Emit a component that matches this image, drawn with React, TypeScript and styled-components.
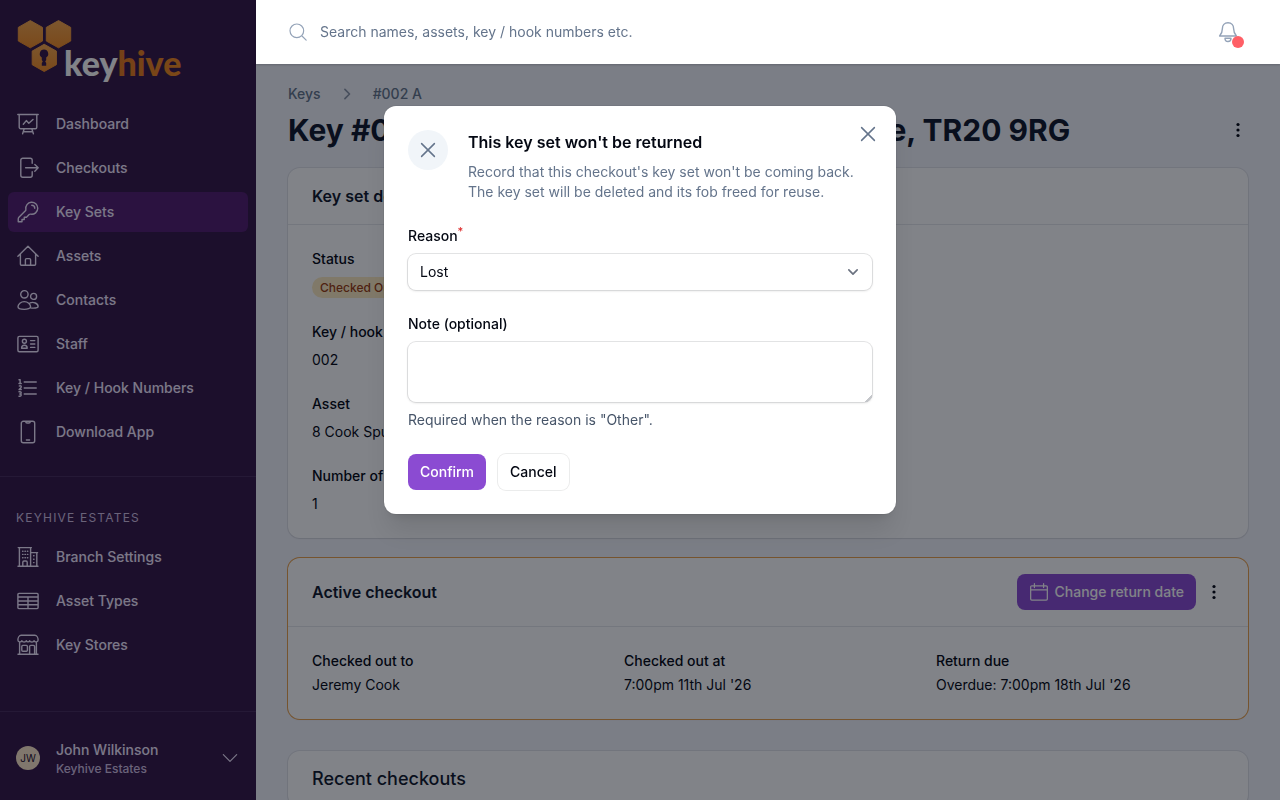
import React from "react";
import styled, { createGlobalStyle } from "styled-components";

const GlobalStyle = createGlobalStyle`
  *, *::before, *::after { box-sizing: border-box; }
  body {
    margin: 0;
    overflow: hidden;
    background: #f3f4fa;
    color: #030712;
    font-family: Inter, "Liberation Sans", sans-serif;
    font-size: 14px;
    line-height: 20px;
  }
  h1, h2, p, dl, dd, ul, ol { margin: 0; padding: 0; }
  ul, ol { list-style: none; }
  a { color: inherit; text-decoration: none; }
  button, select, textarea, input { font: inherit; color: inherit; }
`;

const Svg = styled.svg<{ $size?: number; $weight?: number }>`
  display: block;
  flex: none;
  width: ${(p) => p.$size ?? 24}px;
  height: ${(p) => p.$size ?? 24}px;
  fill: none;
  stroke: currentColor;
  stroke-width: ${(p) => p.$weight ?? 1.4};
  stroke-linecap: round;
  stroke-linejoin: round;
`;

const Shell = styled.div`
  display: grid;
  grid-template-columns: 256px minmax(0, 1fr);
  align-items: start;
  min-height: 100vh;
`;

/* Sidebar */
const Sidebar = styled.aside`
  display: flex;
  flex-direction: column;
  height: 100vh;
  background: #351747;
  color: #fff;
`;
const LogoLink = styled.a`
  display: block;
  padding: 16px;
  height: 104px;
`;
const LogoSvg = styled.svg`
  display: block;
  width: 168px;
  height: 72px;
  font-family: Lato, sans-serif;
  font-weight: 900;
  font-size: 34px;
`;
const NavList = styled.ul`
  display: grid;
  gap: 4px;
  padding: 0 8px;
`;
const NavLink = styled.a<{ $active?: boolean }>`
  display: flex;
  align-items: center;
  gap: 16px;
  height: 40px;
  padding: 0 8px;
  border-radius: 6px;
  font-weight: 500;
  color: #f3e8ff;
  background: ${(p) => (p.$active ? "#521c6e" : "transparent")};
`;
const NavGroup = styled.div`
  margin-top: 24px;
  padding-top: 31px;
  border-top: 1px solid #472a5a;
`;
const NavHeading = styled.h2`
  padding: 0 16px;
  margin-bottom: 9px;
  font-size: 12px;
  line-height: 20px;
  font-weight: 400;
  letter-spacing: 0.1em;
  text-transform: uppercase;
  color: #d0bfe0;
`;
const UserMenu = styled.button`
  display: flex;
  align-items: center;
  gap: 16px;
  margin-top: auto;
  padding: 28px 16px 24px;
  height: 89px;
  border: 0;
  border-top: 1px solid #472a5a;
  background: none;
  text-align: left;
  color: #f3e8ff;
`;
const Avatar = styled.span`
  display: grid;
  place-items: center;
  width: 24px;
  height: 24px;
  border-radius: 50%;
  background: #fde6c8;
  color: #1c0e2d;
  font-size: 10px;
  font-weight: 400;
`;
const UserText = styled.span`
  display: grid;
  flex: 1;
  padding-top: 2px;
  font-weight: 500;
  small {
    font-size: 12px;
    line-height: 18px;
    color: #d0bfe0;
  }
`;

/* Top bar */
const Column = styled.div`
  min-width: 0;
`;
const TopBar = styled.header`
  position: relative;
  z-index: 30;
  display: flex;
  align-items: center;
  height: 64px;
  padding: 0 40px 0 32px;
  background: #fff;
  box-shadow: 0 1px 2px rgba(3, 7, 18, 0.2);
  color: #94a3b8;
`;
const SearchLabel = styled.label`
  display: flex;
  flex: 1;
  align-items: center;
  gap: 12px;
`;
const SearchInput = styled.input`
  flex: 1;
  border: 0;
  padding: 0;
  outline: 0;
  background: none;
  &::placeholder { color: #64748b; opacity: 1; }
`;
const BellButton = styled.button`
  position: relative;
  padding: 0;
  border: 0;
  background: none;
`;
const AlertDot = styled.span`
  position: absolute;
  right: -4px;
  bottom: -4px;
  width: 12px;
  height: 12px;
  border-radius: 50%;
  background: #ff5f66;
`;

/* Page */
const Main = styled.main`
  padding: 20px 32px 32px;
`;
const Crumbs = styled.ol`
  display: flex;
  align-items: center;
  gap: 16px;
  font-weight: 500;
  color: #64748b;
`;
const Crumb = styled.li`
  display: flex;
  align-items: center;
  gap: 16px;
  svg { color: #8b95a7; }
`;
const TitleRow = styled.div`
  display: flex;
  align-items: center;
  justify-content: space-between;
  margin: 8px 0 20px;
`;
const Title = styled.h1`
  font-size: 30px;
  line-height: 36px;
  font-weight: 700;
  white-space: nowrap;
  color: #0f172a;
`;
const IconButton = styled.button`
  padding: 0;
  border: 0;
  background: none;
  color: inherit;
`;
const Card = styled.section<{ $accent?: boolean; $space?: number }>`
  margin-top: ${(p) => p.$space ?? 0}px;
  border-radius: 12px;
  background: #fff;
  box-shadow: 0 0 0 1px ${(p) => (p.$accent ? "#e8a04a" : "rgba(15, 23, 42, 0.08)")},
    0 1px 2px rgba(3, 7, 18, 0.06);
`;
const CardHead = styled.div`
  display: flex;
  align-items: center;
  gap: 8px;
  padding: 16px 24px;
`;
const CardTitle = styled.h2<{ $table?: boolean }>`
  flex: 1;
  font-size: ${(p) => (p.$table ? 18 : 16)}px;
  line-height: 24px;
  font-weight: ${(p) => (p.$table ? 500 : 600)};
  color: #0f172a;
`;
const Details = styled.dl<{ $columns?: number }>`
  display: grid;
  grid-template-columns: repeat(${(p) => p.$columns ?? 1}, minmax(0, 1fr));
  gap: 24px;
  padding: 24px;
  border-top: 1px solid #e5e7eb;
`;
const Entry = styled.div<{ $gap: number }>`
  display: grid;
  gap: ${(p) => p.$gap}px;
  dt { font-weight: 500; }
`;
const Badge = styled.span`
  display: block;
  width: fit-content;
  padding: 0 8px;
  border-radius: 12px;
  background: #fdebc0;
  color: #9a3c10;
  font-size: 12px;
  line-height: 21px;
  font-weight: 500;
`;
const Button = styled.button<{ $primary?: boolean }>`
  display: flex;
  align-items: center;
  gap: 6px;
  height: 36px;
  padding: 0 12px;
  border: 0;
  border-radius: 8px;
  font-weight: 500;
  color: ${(p) => (p.$primary ? "#fff" : "#030712")};
  background: ${(p) => (p.$primary ? "#8b4bd2" : "#fff")};
  box-shadow: ${(p) => (p.$primary ? "none" : "0 0 0 1px rgba(3, 7, 18, 0.08)")};
`;

/* Dialog */
const Backdrop = styled.div`
  position: fixed;
  inset: 0;
  z-index: 20;
  background: rgba(3, 7, 18, 0.5);
`;
const DialogLayer = styled.div`
  position: fixed;
  inset: 0;
  z-index: 40;
  display: grid;
  grid-template-rows: 1fr auto 3fr;
  justify-items: center;
  padding: 16px;
`;
const Dialog = styled.form`
  grid-row: 2;
  position: relative;
  width: 100%;
  max-width: 512px;
  padding: 24px;
  border-radius: 12px;
  background: #fff;
  box-shadow: 0 20px 25px -5px rgba(0, 0, 0, 0.1), 0 8px 10px -6px rgba(0, 0, 0, 0.1),
    0 0 0 1px rgba(3, 7, 18, 0.05);
`;
const CloseButton = styled(IconButton)`
  position: absolute;
  top: 16px;
  right: 16px;
  color: #64748b;
`;
const DialogHead = styled.div`
  display: flex;
  gap: 20px;
`;
const DialogIcon = styled.span`
  display: grid;
  place-items: center;
  flex: none;
  width: 40px;
  height: 40px;
  border-radius: 50%;
  background: #f1f5f9;
  color: #64748b;
`;
const DialogTitle = styled.h2`
  font-size: 16px;
  line-height: 24px;
  font-weight: 600;
`;
const DialogText = styled.p`
  margin-top: 8px;
  color: #64748b;
`;
const Field = styled.div`
  display: grid;
  gap: 8px;
  margin-top: 24px;
`;
const FieldLabel = styled.label`
  font-weight: 500;
  sup {
    font-size: 11px;
    line-height: 0;
    color: #dc2626;
  }
`;
const SelectWrap = styled.div`
  position: relative;
  color: #6b7280;
  svg {
    position: absolute;
    right: 9px;
    top: 8px;
    pointer-events: none;
  }
`;
const controlRing = "0 0 0 1px rgba(3, 7, 18, 0.1), 0 1px 2px 1px rgba(0, 0, 0, 0.06)";
const Select = styled.select`
  display: block;
  appearance: none;
  width: 100%;
  height: 36px;
  padding: 0 12px;
  border: 0;
  border-radius: 8px;
  background: #fff;
  color: #030712;
  box-shadow: ${controlRing};
`;
const TextArea = styled.textarea`
  display: block;
  width: 100%;
  height: 60px;
  padding: 8px 12px;
  border: 0;
  border-radius: 8px;
  background: #fff;
  resize: vertical;
  box-shadow: ${controlRing};
  &::-webkit-resizer {
    background: linear-gradient(135deg, transparent 74%, #c4c6ca 74%, #c4c6ca 86%, transparent 86%);
  }
`;
const Hint = styled.p`
  color: #475569;
`;
const Actions = styled.div`
  display: flex;
  gap: 12px;
  margin-top: 24px;
`;

const icons = {
  dashboard: "M1.8 2.5h20.4M3.2 2.5v12.8a1.5 1.5 0 0 0 1.5 1.5h14.6a1.5 1.5 0 0 0 1.5-1.5V2.5M7.3 12.2l3-3.6 2.5 2.6L17 7.4M8.2 16.8 6.6 21.8M15.8 16.8l1.6 5M7.2 19.8h9.6",
  checkouts: "M16.2 7.2V4.2a2 2 0 0 0-2-2H6.8a2 2 0 0 0-2 2v15a2 2 0 0 0 2 2h7.4a2 2 0 0 0 2-2v-3.4M9.6 11.8h12.6M18.8 8.4l3.4 3.4-3.4 3.4",
  key: "M15.75 5.25a3 3 0 0 1 3 3m3 0a6 6 0 0 1-7.029 5.912c-.563-.097-1.159.026-1.563.43L10.5 17.25H8.25v2.25H6v2.25H2.25v-2.818c0-.597.237-1.17.659-1.591l6.499-6.499c.404-.404.527-1 .43-1.563A6 6 0 1 1 21.75 8.25Z",
  home: "M1.9 12.2 12 2.2l10.1 10M4.4 10v10.3a1 1 0 0 0 1 1h13.2a1 1 0 0 0 1-1V10M9.4 21.2v-5.4a1.2 1.2 0 0 1 1.2-1.2h2.8a1.2 1.2 0 0 1 1.2 1.2v5.4",
  contacts: "M8.4 2.6a3.7 3.7 0 1 0 0 7.4 3.7 3.7 0 0 0 0-7.4ZM17.6 5.4a3 3 0 1 0 0 6 3 3 0 0 0 0-6ZM8.3 13.6c-3.4 0-6.3 2.6-6.3 5.2 0 3.4 12.6 3.4 12.6 0 0-2.6-2.9-5.2-6.3-5.2ZM14.1 14.9c3.2-1.5 8 .6 8 3.6 0 1.6-4.3 1.8-7.5 1.4",
  staff: "M3.4 4.4h17.2a1.5 1.5 0 0 1 1.5 1.5v12.4a1.5 1.5 0 0 1-1.5 1.5H3.4a1.5 1.5 0 0 1-1.5-1.5V5.9a1.5 1.5 0 0 1 1.5-1.5ZM8.4 7.2a2 2 0 1 0 0 4 2 2 0 0 0 0-4ZM5.6 16.2c0-4 5.6-4 5.6 0ZM14.6 8.6h4.2M14.6 12h4.2M14.6 15.4h4.2",
  numbers: "M8.242 5.992h12m-12 6.003H20.24m-12 5.999h12M4.117 7.495v-3.75H2.99m1.125 3.75H2.99m1.125 0H5.24m-1.92 2.577a1.125 1.125 0 1 1 1.591 1.59l-1.83 1.83h2.16M2.99 15.745h1.125a1.125 1.125 0 0 1 0 2.25H3.74m0-.002h.375a1.125 1.125 0 0 1 0 2.25H2.99",
  phone: "M7.3 1.3h9.4a2 2 0 0 1 2 2v17.4a2 2 0 0 1-2 2H7.3a2 2 0 0 1-2-2V3.3a2 2 0 0 1 2-2ZM9.6 1.5c.2 1 .7 1.5 1.4 1.5h2c.7 0 1.2-.5 1.4-1.5M10.4 20h3.2",
  building: "M2 21.2h20M3.4 21.2V2.8M14.6 21.2V2.8M2.2 2.6h13.2M14.6 7.6h7M20.8 7.6v13.6M6.8 21.2v-4a1.2 1.2 0 0 1 1.2-1.2h2a1.2 1.2 0 0 1 1.2 1.2v4M6.6 6.2h.4M9 6.2h.4M11.4 6.2h.4M6.6 9.4h.4M9 9.4h.4M11.4 9.4h.4M6.6 12.7h.4M9 12.7h.4M11.4 12.7h.4M17.6 10.8h.4M17.6 14.2h.4M17.6 17.6h.4",
  table: "M2.9 4.4h18.2a1 1 0 0 1 1 1v13.2a1 1 0 0 1-1 1H2.9a1 1 0 0 1-1-1V5.4a1 1 0 0 1 1-1ZM1.9 8h20.2M1.9 12h20.2M1.9 15.8h20.2M12 8v11.6",
  store: "M2 21.3h20M3.6 9.2v12M20.4 9.2v12M5.2 2.3h13.6c2 0 3.3 2.4 3.3 4.6 0 2.4-3.4 2.6-4 .8-.6 1.8-3.8 1.8-4.4 0-.4 1.5-3 1.5-3.4 0-.6 1.8-3.8 1.8-4.4 0-.6 1.8-4 1.6-4-.8 0-2.2 1.3-4.6 3.3-4.6ZM6.8 12.4h3.6a1 1 0 0 1 1 1v3.8a1 1 0 0 1-1 1H6.8a1 1 0 0 1-1-1v-3.8a1 1 0 0 1 1-1ZM13.6 21.2v-7.6a1.2 1.2 0 0 1 1.2-1.2h2.6a1.2 1.2 0 0 1 1.2 1.2v7.6",
  search: "M10.6 2.4a8.2 8.2 0 1 0 0 16.4 8.2 8.2 0 0 0 0-16.4ZM16.5 16.5l5.3 5.3",
  bell: "M12 2.7c-3.6 0-5.6 2.6-5.6 5.8 0 3.4-.6 5-2.8 7.5h16.8c-2.2-2.5-2.8-4.1-2.8-7.5 0-3.2-2-5.8-5.6-5.8ZM9 18.2h6c0 4.4-6 4.4-6 0Z",
  close: "M5.6 5.6l12.8 12.8M18.4 5.6l-12.8 12.8",
  calendar: "M3.3 4.6h17.4a1.3 1.3 0 0 1 1.3 1.3v14.4a1.3 1.3 0 0 1-1.3 1.3H3.3A1.3 1.3 0 0 1 2 20.3V5.9a1.3 1.3 0 0 1 1.3-1.3ZM2 9.4h20M6.5 2v4.6M17.5 2v4.6",
  chevronDown: "M4 8l8 8 8-8",
  chevronRight: "M9.5 6.5l5.5 5.5-5.5 5.5",
  selectArrow: "M7 9.5l5 5 5-5",
};

type IconProps = { name: keyof typeof icons; size?: number; weight?: number };
const Icon = ({ name, size, weight }: IconProps) => (
  <Svg viewBox="0 0 24 24" $size={size} $weight={weight} aria-hidden="true">
    <path d={icons[name]} />
  </Svg>
);

const Dots = () => (
  <Svg viewBox="0 0 20 20" $size={20} aria-hidden="true">
    <g fill="currentColor" stroke="none">
      <circle cx="10" cy="4.5" r="1.6" />
      <circle cx="10" cy="10" r="1.6" />
      <circle cx="10" cy="15.5" r="1.6" />
    </g>
  </Svg>
);

const Logo = () => (
  <LogoSvg viewBox="0 0 168 72" role="img" aria-label="keyhive">
    <defs>
      <linearGradient id="comb" x1="0" y1="0" x2="0" y2="1">
        <stop offset="0" stopColor="#f5a64a" />
        <stop offset="1" stopColor="#f08a24" />
      </linearGradient>
      <linearGradient id="word" x1="0" y1="0" x2="1" y2="0">
        <stop offset="0" stopColor="#d9691a" />
        <stop offset="1" stopColor="#f28a1e" />
      </linearGradient>
    </defs>
    <g fill="url(#comb)" stroke="url(#comb)" strokeWidth="1" strokeLinejoin="round">
      <path d="M14.3 4.600l12.200 6.800v13.600L14.300 31.800 2.300 25V11.400Z" />
      <path d="M42.500 4.600l12.200 6.800v13.600l-12.200 6.800L30.300 25V11.400Z" />
      <path d="M28.200 28.300l12.200 6.800v13.600l-12.200 6.800L16.200 48.700V35.100Z" />
    </g>
    <path d="M28 33.600a4.200 4.200 0 0 1 2.200 7.800v2.600l-1 1.500 1 1.500v2.800h-4.400v-2.800l1-1.500-1-1.500v-2.600A4.200 4.200 0 0 1 28 33.600Z" fill="#351747" />
    <text x="48" y="60" fill="#fff">
      key<tspan fill="url(#word)">hive</tspan>
    </text>
  </LogoSvg>
);

const mainNav: { label: string; icon: keyof typeof icons }[] = [
  { label: "Dashboard", icon: "dashboard" },
  { label: "Checkouts", icon: "checkouts" },
  { label: "Key Sets", icon: "key" },
  { label: "Assets", icon: "home" },
  { label: "Contacts", icon: "contacts" },
  { label: "Staff", icon: "staff" },
  { label: "Key / Hook Numbers", icon: "numbers" },
  { label: "Download App", icon: "phone" },
];
const branchNav: typeof mainNav = [
  { label: "Branch Settings", icon: "building" },
  { label: "Asset Types", icon: "table" },
  { label: "Key Stores", icon: "store" },
];

const Nav = ({ items }: { items: typeof mainNav }) => (
  <NavList>
    {items.map((item) => (
      <li key={item.label}>
        <NavLink href="#" $active={item.label === "Key Sets"}>
          <Icon name={item.icon} />
          {item.label}
        </NavLink>
      </li>
    ))}
  </NavList>
);

export default function App() {
  return (
    <>
      <GlobalStyle />
      <Shell>
        <Sidebar>
          <LogoLink href="#"><Logo /></LogoLink>
          <nav>
            <Nav items={mainNav} />
            <NavGroup>
              <NavHeading>Keyhive Estates</NavHeading>
              <Nav items={branchNav} />
            </NavGroup>
          </nav>
          <UserMenu type="button">
            <Avatar>JW</Avatar>
            <UserText>
              John Wilkinson
              <small>Keyhive Estates</small>
            </UserText>
            <Icon name="chevronDown" size={20} />
          </UserMenu>
        </Sidebar>

        <Column>
          <TopBar>
            <SearchLabel>
              <Icon name="search" size={20} />
              <SearchInput
                type="search"
                aria-label="Search"
                placeholder="Search names, assets, key / hook numbers etc."
              />
            </SearchLabel>
            <BellButton type="button" aria-label="Notifications">
              <Icon name="bell" />
              <AlertDot />
            </BellButton>
          </TopBar>

          <Main>
            <Crumbs>
              <Crumb><a href="#">Keys</a></Crumb>
              <Crumb>
                <Icon name="chevronRight" size={20} weight={2} />
                <a href="#">#002 A</a>
              </Crumb>
            </Crumbs>
            <TitleRow>
              <Title>Key #002 A - 8 Cook Spurr, Marazion Gate, TR20 9RG</Title>
              <IconButton type="button" aria-label="Key set actions"><Dots /></IconButton>
            </TitleRow>

            <Card>
              <CardHead><CardTitle>Key set details</CardTitle></CardHead>
              <Details>
                <Entry $gap={8}><dt>Status</dt><dd><Badge>Checked Out</Badge></dd></Entry>
                <Entry $gap={8}><dt>Key / hook number</dt><dd>002</dd></Entry>
                <Entry $gap={8}><dt>Asset</dt><dd>8 Cook Spurr</dd></Entry>
                <Entry $gap={8}><dt>Number of keys</dt><dd>1</dd></Entry>
              </Details>
            </Card>

            <Card $accent $space={20}>
              <CardHead>
                <CardTitle>Active checkout</CardTitle>
                <Button type="button" $primary>
                  <Icon name="calendar" size={20} weight={1.5} />
                  Change return date
                </Button>
                <IconButton type="button" aria-label="Checkout actions"><Dots /></IconButton>
              </CardHead>
              <Details $columns={3}>
                <Entry $gap={4}><dt>Checked out to</dt><dd>Jeremy Cook</dd></Entry>
                <Entry $gap={4}><dt>Checked out at</dt><dd>7:00pm 11th Jul '26</dd></Entry>
                <Entry $gap={4}><dt>Return due</dt><dd>Overdue: 7:00pm 18th Jul '26</dd></Entry>
              </Details>
            </Card>

            <Card $space={32}>
              <CardHead><CardTitle $table>Recent checkouts</CardTitle></CardHead>
            </Card>
          </Main>
        </Column>
      </Shell>

      <Backdrop />
      <DialogLayer>
        <Dialog role="dialog" aria-modal="true" aria-labelledby="dialog-title">
          <CloseButton type="button" aria-label="Close">
            <Icon name="close" weight={1.5} />
          </CloseButton>
          <DialogHead>
            <DialogIcon><Icon name="close" weight={1.5} /></DialogIcon>
            <div>
              <DialogTitle id="dialog-title">This key set won't be returned</DialogTitle>
              <DialogText>
                Record that this checkout's key set won't be coming back. The key set will be
                deleted and its fob freed for reuse.
              </DialogText>
            </div>
          </DialogHead>
          <Field>
            <FieldLabel htmlFor="reason">Reason<sup>*</sup></FieldLabel>
            <SelectWrap>
              <Select id="reason" defaultValue="Lost">
                <option>Lost</option>
                <option>Other</option>
              </Select>
              <Icon name="selectArrow" size={20} weight={2} />
            </SelectWrap>
          </Field>
          <Field>
            <FieldLabel htmlFor="note">Note (optional)</FieldLabel>
            <TextArea id="note" />
            <Hint>Required when the reason is "Other".</Hint>
          </Field>
          <Actions>
            <Button type="submit" $primary>Confirm</Button>
            <Button type="button">Cancel</Button>
          </Actions>
        </Dialog>
      </DialogLayer>
    </>
  );
}
